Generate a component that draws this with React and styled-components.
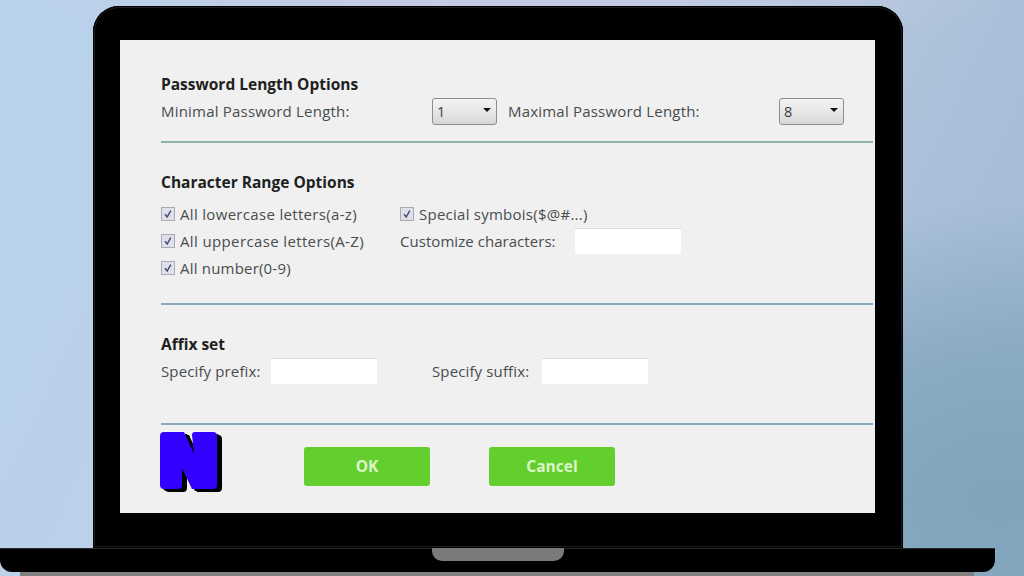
import React from "react";
import styled, { createGlobalStyle } from "styled-components";

const Global = createGlobalStyle`
  html, body { margin: 0; padding: 0; width: 1024px; height: 576px; overflow: hidden; }
  body { font-family: "Open Sans", "Noto Sans", sans-serif; }
`;

const Stage = styled.div`
  position: relative;
  width: 1024px;
  height: 576px;
  overflow: hidden;
  padding-top: 6px;
  box-sizing: border-box;
  background:
    radial-gradient(ellipse 420px 300px at 1000px 500px, #7fa4bc 0%, rgba(127,164,188,0.75) 45%, rgba(127,164,188,0) 100%),
    radial-gradient(ellipse 500px 60px at 500px 0, #c6cbe2 0%, rgba(198,203,226,0) 100%),
    linear-gradient(115deg, #b9d3ed 0%, #bccfe8 35%, #b0c4dc 70%, #9fb8d0 100%);
`;

const Lid = styled.div`
  width: 810px;
  height: 542px;
  margin-left: 93px;
  box-sizing: border-box;
  padding: 34px 28px 35px 27px;
  background: #000;
  border-radius: 26px 26px 0 0;
  box-shadow: inset 0 0 0 1px #000, inset 0 0 0 2px #1d1d1d;
`;

const Screen = styled.div`
  position: relative;
  height: 473px;
  box-sizing: border-box;
  padding: 0 2px 0 41px;
  background: #f0f0f0;
`;

const Section = styled.section`
  padding-top: ${(p) => p.$top}px;
  padding-bottom: ${(p) => p.$bottom}px;
  border-bottom: 2px solid ${(p) => p.$line};
`;

const Title = styled.h2`
  margin: 0 0 ${(p) => p.$gap}px;
  font-size: 15.5px;
  line-height: 20px;
  font-weight: 700;
  color: #1d1f20;
`;

const Row = styled.div`
  display: flex;
  align-items: center;
  height: 26px;
`;

const Label = styled.span`
  flex: none;
  box-sizing: border-box;
  width: ${(p) => (p.$w ? `${p.$w}px` : "auto")};
  font-size: 15px;
  letter-spacing: ${(p) => p.$track ?? 0.2}px;
  line-height: 20px;
  font-weight: 500;
  color: #484d4e;
  white-space: nowrap;
`;

const Select = styled.div`
  flex: none;
  display: flex;
  align-items: center;
  justify-content: space-between;
  box-sizing: border-box;
  width: 65px;
  height: 27px;
  margin-right: ${(p) => p.$after || 0}px;
  padding: 1px 5px 0 4px;
  border: 1px solid #8c8f8f;
  border-radius: 3px;
  background: linear-gradient(#f3f3f3, #e6e6e6 55%, #d6d6d6);
  font-size: 14.5px;
  color: #3a3d3e;
`;

const Caret = styled.i`
  width: 0;
  height: 0;
  margin-top: -4px;
  border-left: 4px solid transparent;
  border-right: 4px solid transparent;
  border-top: 4px solid #111;
`;

const Options = styled.div`
  display: grid;
  grid-template-columns: 239px 1fr;
  grid-auto-rows: 27px;
`;

const Option = styled.label`
  display: flex;
  align-items: center;
  gap: 5px;
  grid-column: ${(p) => p.$col};
`;

const Box = styled.span`
  flex: none;
  display: flex;
  align-items: center;
  justify-content: center;
  box-sizing: border-box;
  width: 14px;
  height: 14px;
  border: 1px solid #a8abb4;
  background: #dfe0e8;
`;

const Field = styled.div`
  flex: none;
  box-sizing: border-box;
  width: 106px;
  height: 26px;
  margin-right: ${(p) => p.$after || 0}px;
  background: #fff;
  border-top: 1px solid #dcdcdc;
`;

const Footer = styled.div`
  display: flex;
  gap: 59px;
  padding: 22px 0 0 143px;
`;

const Action = styled.div`
  display: flex;
  align-items: center;
  justify-content: center;
  box-sizing: border-box;
  width: 126px;
  height: 39px;
  padding-bottom: 1px;
  border-radius: 3px;
  background: #62cf2f;
  color: #dcf6c6;
  font-size: 15.5px;
  font-weight: 700;
`;

const Logo = styled.svg`
  position: absolute;
  left: 40px;
  top: 392px;
`;

const Base = styled.div`
  position: relative;
  box-sizing: border-box;
  width: 995px;
  height: 24px;
  background: #000;
  border-top: 1px solid #2a2a2a;
  border-radius: 0 0 12px 12px;
`;

const Notch = styled.div`
  position: absolute;
  left: 432px;
  top: -1px;
  width: 132px;
  height: 13px;
  background: #7a7a7a;
  border-radius: 0 0 10px 10px;
`;

const Foot = styled.div`
  width: 954px;
  height: 4px;
  margin-left: 20px;
  background: #808080;
`;

const Check = () => (
  <Box>
    <svg width="10" height="10" viewBox="0 0 10 10" fill="none">
      <path d="M2 5.2 L4.2 8 L7.8 1.6" stroke="#4a4a78" strokeWidth="1.5" />
    </svg>
  </Box>
);

const N = "M4 0 H24 L34 22 L32 3 Q32 0 35 0 H53 Q57 0 57 4 V53 Q57 57 53 57 H32 L22 36 V53 Q22 57 18 57 H4 Q0 57 0 53 V4 Q0 0 4 0 Z";

export default function App() {
  return (
    <Stage>
      <Global />
      <Lid>
        <Screen>
          <Section $top={34} $bottom={17} $line="#8fb0a9">
            <Title $gap={4}>Password Length Options</Title>
            <Row>
              <Label $w={271}>Minimal Password Length:</Label>
              <Select $after={11}>1<Caret /></Select>
              <Label $w={271}>Maximal Password Length:</Label>
              <Select>8<Caret /></Select>
            </Row>
          </Section>
          <Section $top={29} $bottom={22} $line="#86aabf">
            <Title $gap={8}>Character Range Options</Title>
            <Options>
              <Option $col={1}><Check /><Label $track={0.32}>All lowercase letters(a-z)</Label></Option>
              <Option $col={2}><Check /><Label $track={0.25}>Special symbois($@#...)</Label></Option>
              <Option $col={1}><Check /><Label $track={0.37}>All uppercase letters(A-Z)</Label></Option>
              <Option $col={2}><Label $w={170} $track={0.05}>Customize characters:</Label><Field /></Option>
              <Option $col={1}><Check /><Label>All number(0-9)</Label></Option>
            </Options>
          </Section>
          <Section $top={29} $bottom={39} $line="#86aabf">
            <Title $gap={4}>Affix set</Title>
            <Row>
              <Label $w={110} $track={0.13}>Specify prefix:</Label>
              <Field $after={55} />
              <Label $w={110} $track={0.13}>Specify suffix:</Label>
              <Field />
            </Row>
          </Section>
          <Footer>
            <Action>OK</Action>
            <Action>Cancel</Action>
          </Footer>
          <Logo width="62" height="61" viewBox="0 0 62 61">
            <path d={N} fill="#000" transform="translate(5 3)" />
            <path d={N} fill="#000" transform="translate(3 2)" />
            <path d={N} fill="#3300ff" />
          </Logo>
        </Screen>
      </Lid>
      <Base><Notch /></Base>
      <Foot />
    </Stage>
  );
}
